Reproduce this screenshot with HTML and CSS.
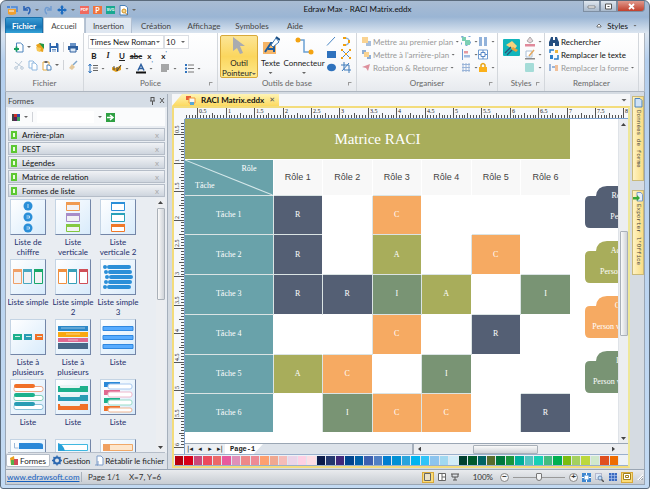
FILE: index.html
```
<!DOCTYPE html>
<html lang="fr">

<head>
     <meta charset="UTF-8">
     <meta name="viewport" content="width=device-width, initial-scale=1.0">
     <title>Edraw Max - RACI Matrix.eddx</title>
     <link rel="stylesheet" href="styles.css">
</head>

<body>
     <div class="window">

          <header class="titlebar">
               <div class="quick">
                    <svg width="12" height="12" viewBox="0 0 12 12"><path d="M1 2h3v2H1z" fill="#4a86d8"/><path d="M2 5h8v5q-5 2-8 0z" fill="#f0a030"/><path d="M5 3h6v5" fill="none" stroke="#4a86d8" stroke-width="1.5"/><path d="M3 7h5" stroke="#fff"/></svg>
                    <svg width="9" height="10" viewBox="0 0 9 10"><path d="M2 1v4h4M2 5q5-5 6 0q0 3-2 4" fill="none" stroke="#2c63b4" stroke-width="1.6"/></svg>
                    <i class="caret"></i>
                    <svg width="9" height="10" viewBox="0 0 9 10"><path d="M7 1v4H3M7 5Q2 0 1 5q0 3 2 4" fill="none" stroke="#6f9bd0" stroke-width="1.4"/></svg>
                    <svg width="10" height="10" viewBox="0 0 10 10"><path d="M5 0l2 2.500H6V4h1.500V3L10 5 7.500 7V6H6v1.500h1L5 10 3 7.500h1V6H2.500v1L0 5l2.500-2v1H4V2.500H3z" fill="#1d6cc0"/></svg>
                    <i class="caret"></i>
                    <span class="chip pdf">PDF</span>
                    <span class="chip ppt">P</span>
                    <span class="chip svgc">SVG</span>
                    <svg width="9" height="11" viewBox="0 0 9 11"><path d="M1 .5h5l2.500 2V10H1z" fill="#fff" stroke="#4a80b8"/><circle cx="5" cy="6" r="2" fill="#f7d890" stroke="#d09020"/><path d="M6.500 8l2 2" stroke="#b07018"/></svg>
                    <i class="caret"></i>
               </div>
               <h1>Edraw Max - RACI Matrix.eddx</h1>
               <div class="winbtns">
                    <button aria-label="Réduire"><svg width="9" height="7"><path d="M1 3h7v2H1z" fill="#fff" stroke="#555" stroke-width=".6"/></svg></button>
                    <button aria-label="Agrandir"><svg width="9" height="7"><path d="M1.500 1h6v5h-6z" fill="#fff" stroke="#555"/><path d="M3.500 3h2v1h-2z" fill="#555"/></svg></button>
                    <button class="close" aria-label="Fermer"><svg width="9" height="7"><path d="M2 1l5 5M7 1L2 6" stroke="#fff" stroke-width="1.800"/></svg></button>
               </div>
          </header>

          <nav class="tabs">
               <button class="file">Fichier</button>
               <button class="active">Accueil</button>
               <button class="hover">Insertion</button>
               <button>Création</button>
               <button>Affichage</button>
               <button>Symboles</button>
               <button class="short">Aide</button>
               <button class="right"><svg width="6" height="5"><path d="M1 3l2-2 2 2v1H1z" fill="#fff" stroke="#555" stroke-width=".8"/></svg>Styles<i class="caret"></i></button>
          </nav>

          <section class="ribbon">
               <div class="group g-file">
                    <div class="body">
                         <div class="line">
                              <svg class="w10" viewBox="0 0 10 11"><path d="M2.500 1h4l2.500 2v7H2.500z" fill="#fff" stroke="#4d84bd"/><path d="M0 7h5M2.500 4.500v5" stroke="#18a060" stroke-width="1.800"/></svg>
                              <i class="caret"></i>
                              <svg class="w10" viewBox="0 0 10 11"><path d="M1 3l4-2 4 3-1 6-4-1z" fill="#e9a31c"/><path d="M4 1l5 1v5z" fill="#209848"/><path d="M1 5l5 1-1 4-3-1z" fill="#f7c856"/></svg>
                              <svg class="w10" viewBox="0 0 10 11"><path d="M.5 1h8L9.500 2v8H.5z" fill="#2d66ad"/><path d="M2 1h5v3H2zM2 6h6v4H2z" fill="#fff"/><path d="M3 7.500h4M3 9h4" stroke="#2d66ad" stroke-width=".7"/></svg>
                              <b class="sep"></b>
                              <svg class="w10" viewBox="0 0 10 11"><path d="M2 1h6v3H2z" fill="#6a94c8"/><path d="M0 4h10v4H0z" fill="#2d5e9e"/><path d="M2 6h6v4H2z" fill="#dbe8f6" stroke="#2d5e9e"/></svg>
                         </div>
                         <div class="line">
                              <svg class="w10" viewBox="0 0 10 11"><path d="M1 2l7 5M8 1L3 7" stroke="#b8c8d8"/><circle cx="2" cy="8" r="1.300" fill="none" stroke="#b8c8d8"/><circle cx="8" cy="8" r="1.300" fill="none" stroke="#b8c8d8"/></svg>
                              <svg class="w10" viewBox="0 0 10 11"><path d="M1 1h4l1 1v6H1z" fill="#fff" stroke="#90b8e0"/><path d="M4 3h3l2 2v5H4z" fill="#fff" stroke="#90b8e0"/></svg>
                              <svg class="w10" viewBox="0 0 10 11"><path d="M1 2h6v8H1z" fill="#fff" stroke="#e4aa40"/><path d="M2.500 1h3v2h-3z" fill="#666"/><path d="M5 5h2l2 1.500V10H5z" fill="#fff" stroke="#4d84bd"/></svg>
                              <i class="caret"></i>
                              <b class="sep"></b>
                              <svg class="w10" viewBox="0 0 10 11"><path d="M9 1L5 5" stroke="#7fa6cc" stroke-width="1.500"/><path d="M4 4l3 3-3 3-3-2z" fill="#e4c89c"/></svg>
                         </div>
                    </div>
                    <h2>Fichier</h2>
               </div>

               <div class="group g-font">
                    <div class="body">
                         <div class="combos">
                              <span class="combo"><select aria-label="Police"><option>Times New Roman</option></select><i class="caret"></i></span>
                              <span class="combo size"><select aria-label="Taille"><option>10</option></select><i class="caret"></i></span>
                         </div>
                         <div class="fmt">
                              <button><b>B</b></button><button><i>I</i></button><button><u>U</u></button><button><s>abc</s></button><button>x<sub>,</sub></button><button>x<sup>'</sup></button>
                         </div>
                         <div class="fmt2">
                              <span><svg class="w10" viewBox="0 0 10 11"><path d="M2 1v9M.5 3L2 1l1.500 2M.5 8L2 10l1.500-2" fill="none" stroke="#2f72bd"/><path d="M5 2.500h5M5 5h5M5 7.500h5" stroke="#666"/></svg><i class="caret"></i></span>
                              <span><svg class="w10" viewBox="0 0 10 11"><path d="M0 4l4 1 5-3v5L4 9 0 7z" fill="#e4a01c"/><path d="M2 3v4M5 4v4l4-6" fill="none" stroke="#444"/></svg><i class="caret"></i></span>
                              <span><svg class="w10" viewBox="0 0 10 11"><path d="M2 7.500L5 1.500l3 6M3 5.500h4" fill="none" stroke="#2c5fa0" stroke-width="1.500"/><path d="M0 8.500h10v2H0z" fill="#111"/></svg><i class="caret"></i></span>
                              <span><svg class="w10" viewBox="0 0 10 11"><path d="M1 2h8M1 4h8M1 6h8M1 8h6" stroke="#555" stroke-width="1.200"/></svg><i class="caret"></i></span>
                              <span><svg class="w10" viewBox="0 0 10 11"><path d="M1 2h2M1 5.500h2M1 9h2" stroke="#2f72bd" stroke-width="2"/><path d="M4 2h6M4 5.500h6M4 9h6" stroke="#777"/></svg><i class="caret"></i></span>
                         </div>
                    </div>
                    <h2>Police</h2><i class="launch"></i>
               </div>

               <div class="group g-tools">
                    <div class="body row">
                         <button class="big on"><svg width="16" height="20" viewBox="0 0 16 20"><path d="M2 1l12 9H9l3 7-3 1-3-6-4 3z" fill="#a9abb0"/></svg><span>Outil<br>Pointeur<i class="caret"></i></span></button>
                         <button class="big"><svg width="18" height="20" viewBox="0 0 18 20"><path d="M1 6h13v12H1z" fill="#f5b568"/><path d="M3 16L9 7h3v9M6 13h5" fill="none" stroke="#1f5c9c" stroke-width="2"/><path d="M9 9l5-7 3 4-6 5z" fill="#fff" stroke="#3c78b4"/><path d="M14 1l4 3" stroke="#1d4f84" stroke-width="2"/></svg><span>Texte</span><i class="caret"></i></button>
                         <button class="big wide"><svg width="20" height="20" viewBox="0 0 20 20"><path d="M4 4h6v12h7" fill="none" stroke="#6aa0d4" stroke-width="1.500"/><circle cx="4" cy="4" r="2.500" fill="#f3a312"/><circle cx="17" cy="16" r="2.500" fill="#f3a312"/></svg><span>Connecteur</span><i class="caret"></i></button>
                         <div class="shapes">
                              <svg class="w10" viewBox="0 0 10 11"><path d="M1 9.500L9 1" stroke="#4a86c4"/></svg>
                              <svg class="w10" viewBox="0 0 10 11"><path d="M3 2q6 0 5 4q-1 3-4 3" fill="none" stroke="#8fb4dc" stroke-width="1.300"/><path d="M2 1h3v2H2zM7 4h2v3H7zM2 8h3v2H2z" fill="#f0a010"/></svg>
                              <svg class="w10" viewBox="0 0 10 11"><path d="M1 2h9v7H1z" fill="#2f72bd"/></svg>
                              <svg class="w10" viewBox="0 0 10 11"><path d="M1 1l8 8M9 1L1 9" stroke="#4a86c4"/><path d="M0 0h2v2H0zM8 0h2v2H8zM0 8h2v2H0zM8 8h2v2H8zM4 4h2v2H4z" fill="#f0a010"/></svg>
                              <svg class="w10" viewBox="0 0 10 11"><ellipse cx="5.500" cy="5.500" rx="4.500" ry="3.800" fill="#2f72bd"/></svg>
                              <svg class="w10" viewBox="0 0 10 11"><path d="M3 0v8h7M0 3h8v8M1 9l7-8" fill="none" stroke="#3d7abb"/></svg>
                         </div>
                    </div>
                    <h2>Outils de base</h2><i class="launch"></i>
               </div>

               <div class="group g-org">
                    <div class="body row">
                         <div class="list off">
                              <button><svg class="w10" viewBox="0 0 10 11"><path d="M5 5h5v5H5z" fill="#a8bfdc"/><path d="M1 1h6v6H1z" fill="#fad391"/></svg>Mettre au premier plan<i class="caret"></i></button>
                              <button><svg class="w10" viewBox="0 0 10 11"><path d="M1 1h4v4H1zM6 6h4v4H6z" fill="#8fafd6"/><path d="M3 3h5v5H3z" fill="#fad391"/></svg>Mettre à l'arrière-plan<i class="caret"></i></button>
                              <button><svg class="w10" viewBox="0 0 10 11"><path d="M1 5l8-3-2 7-2-3z" fill="#dd8f9c"/></svg>Rotation &amp; Retourner<i class="caret"></i></button>
                         </div>
                         <div class="pairs">
                              <span><svg class="w10" viewBox="0 0 10 11"><path d="M1 1h4v4H1zM4 4h5v5H4z" fill="#7ccfb4"/><path d="M.5.5h9v9h-9z" fill="none" stroke="#7aa5d6" stroke-dasharray="2 5"/></svg><i class="caret"></i></span>
                              <span><svg class="w10" viewBox="0 0 10 11"><path d="M1 1h3v9H1zM6 1h3v9H6z" fill="#92b2da"/></svg><i class="caret"></i></span>
                              <span><svg class="w10" viewBox="0 0 10 11"><path d="M1.500 0v11" stroke="#6e9bd0"/><path d="M3 2h4v2.500H3z" fill="#e59aa0"/><path d="M3 6h6v2.500H3z" fill="#9fbbe0"/></svg><i class="caret"></i></span>
                              <span><svg class="w10" viewBox="0 0 10 11"><path d="M.5 1h9v9h-9z" fill="#fff" stroke="#6e9bd0"/><path d="M3 3.500h4v4H3z" fill="none" stroke="#5a8ac8"/><path d="M5 1v2M5 8v2M1 5.500h2M7 5.500h2" stroke="#5a8ac8"/></svg></span>
                              <span><svg class="w10" viewBox="0 0 10 11"><path d="M1 2.500h8M1 5.500h8M1 8.500h8M2 1v9M5 1v9M8 1v9" stroke="#9ab4d8"/></svg><i class="caret"></i></span>
                              <span><svg class="w10" viewBox="0 0 10 11"><path d="M3 5V3q2-3 4 0v2" fill="none" stroke="#e8a312" stroke-width="1.500"/><path d="M1 5h8v5H1z" fill="#fbb01a"/></svg><i class="caret"></i></span>
                         </div>
                    </div>
                    <h2>Organiser</h2><i class="launch"></i>
               </div>

               <div class="group g-style">
                    <div class="body row">
                         <svg class="stylebtn" width="17" height="17" viewBox="0 0 17 17"><rect width="17" height="17" rx="1" fill="#12b5bb"/><path d="M3 6l6-4 5 5-3 4z" fill="#f8d27c"/><path d="M10 8l5 3-2 2-5-3z" fill="#e9a23b"/><path d="M2 14l6-6M4 16l5-5" stroke="#2c5578" stroke-width="1.300"/></svg>
                         <div class="styleicons">
                              <span><svg class="w10" viewBox="0 0 10 11"><path d="M2 5l3-4 3 4-3 2z" fill="#e7d5da" stroke="#aaa"/><path d="M0 8h10v2.500H0z" fill="#e18a9b"/></svg><i class="caret"></i></span>
                              <span><svg class="w10" viewBox="0 0 10 11"><path d="M1 2h6v6H1z" fill="#fff" stroke="#aac0d8"/><path d="M4 7l5-6" stroke="#e3a860" stroke-width="1.500"/><path d="M0 9h10v1.500H0z" fill="#8a8a8a"/></svg><i class="caret"></i></span>
                              <span><svg class="w10" viewBox="0 0 10 11"><rect y="1" width="9" height="9" rx="1" fill="#a5dcd8"/></svg><i class="caret"></i></span>
                         </div>
                    </div>
                    <h2>Styles</h2><i class="launch"></i>
               </div>

               <div class="group g-find">
                    <div class="body">
                         <div class="list">
                              <button><svg class="w10" viewBox="0 0 10 11"><path d="M1 4l1-3h2v9H0V6zM6 1h2l1 3 1 2v4H6z" fill="#244e80"/><path d="M4 4h2v3H4z" fill="#244e80"/></svg>Rechercher</button>
                              <button><svg class="w10" viewBox="0 0 10 11"><path d="M1 4V1h4M9 6v4H5" fill="none" stroke="#2b7fc8" stroke-width="1.500"/><path d="M6 1h3v3H6z" fill="#efb63a"/><path d="M1 6h3v4H1z" fill="#2b7fc8"/></svg>Remplacer le texte</button>
                              <button class="off"><svg class="w10" viewBox="0 0 10 11"><path d="M1 2v7M3 5h3" stroke="#7b9fd0" stroke-width="1.500"/><path d="M6 3h3v6H6z" fill="#f1c09a"/></svg>Remplacer la forme<i class="caret"></i></button>
                         </div>
                    </div>
                    <h2>Remplacer</h2>
               </div>
          </section>

          <main>
               <aside class="panel">
                    <div class="panelhead"><span>Formes</span>
                         <svg width="16" height="8" viewBox="0 0 16 8"><path d="M1 4h5M2 0v4M5 0v4M2 .5h3M3.500 4v4M11 1l4 5M15 1l-4 5" fill="none" stroke="#555"/></svg>
                    </div>
                    <div class="search">
                         <svg width="8" height="9" viewBox="0 0 8 9"><path d="M0 1h2v7H0z" fill="#444"/><path d="M2 1h3v3H2z" fill="#d03028"/><path d="M5 1h3v3H5z" fill="#2c50a8"/><path d="M2 4h3v4H2z" fill="#5a2058"/><path d="M5 4h3v4H5z" fill="#40a060"/></svg>
                         <i class="caret"></i><b class="sep"></b>
                         <input type="text" aria-label="Rechercher des formes"><i class="caret"></i>
                         <button aria-label="Aller"><svg width="9" height="9"><path d="M0 0h9v9H0z" fill="#2fa043"/><path d="M1 4.500h5M4 2l3 2.500L4 7" fill="none" stroke="#fff" stroke-width="1.500"/></svg></button>
                    </div>
                    <div class="libs">
                         <button>Arrière-plan<em>x</em></button>
                         <button>PEST<em>x</em></button>
                         <button>Légendes<em>x</em></button>
                         <button>Matrice de relation<em>x</em></button>
                         <button>Formes de liste<em>x</em></button>
                    </div>
                    <div class="shapelist">
                         <div class="thumbs">
                              <figure><svg viewBox="0 0 34 34"><g fill="#2b8fd8"><circle cx="17" cy="6" r="4.500"/><circle cx="17" cy="17" r="4.500"/><circle cx="17" cy="28" r="4.500"/></g><path d="M17 4v4M15.500 16h3v2h-3M15.500 27h3v2h-3" fill="none" stroke="#bfe0f8"/></svg><figcaption>Liste de chiffre</figcaption></figure>
                              <figure><svg viewBox="0 0 34 34"><g fill="#f2f2f4"><path d="M10.500 3.500h13v7h-13z" stroke="#f09a50"/><path d="M10.500 14.500h13v7h-13z" stroke="#a78cc8"/><path d="M10.500 25.500h13v6h-13z" stroke="#84c840"/></g><path d="M10 2h14v3H10z" fill="#f09a50"/><path d="M10 13h14v3H10z" fill="#a78cc8"/><path d="M10 24h14v3H10z" fill="#84c840"/></svg><figcaption>Liste verticale</figcaption></figure>
                              <figure><svg viewBox="0 0 34 34"><g fill="#fff"><path d="M10.500 3.500h13v7h-13z" stroke="#2b8fd8"/><path d="M10.500 14.500h13v7h-13z" stroke="#28a0b8"/><path d="M10.500 25.500h13v6h-13z" stroke="#f07828"/></g><path d="M10 2h14v2H10z" fill="#2b8fd8"/><path d="M10 13h14v2H10z" fill="#28a0b8"/><path d="M10 24h14v3H10z" fill="#f07828"/></svg><figcaption>Liste verticale 2</figcaption></figure>

                              <figure><svg viewBox="0 0 34 34"><g fill="#f2f2f4"><path d="M2.500 9.500h8v14h-8z" stroke="#f0a068"/><path d="M12.500 9.500h8v14h-8z" stroke="#48a8c0"/><path d="M23.500 9.500h8v14h-8z" stroke="#18a868"/></g><path d="M2 9h9v3H2z" fill="#f0a068"/><path d="M12 9h9v3h-9z" fill="#48a8c0"/><path d="M23 9h9v3h-9z" fill="#18a868"/></svg><figcaption>Liste simple</figcaption></figure>
                              <figure><svg viewBox="0 0 34 34"><g fill="#fff"><path d="M2.500 9.500h8v14h-8z" stroke="#f09040"/><path d="M12.500 9.500h8v14h-8z" stroke="#38a0b8"/><path d="M23.500 9.500h8v14h-8z" stroke="#d05058"/></g><path d="M2 9h9v3H2z" fill="#f09040"/><path d="M12 9h9v3h-9z" fill="#38a0b8"/><path d="M23 9h9v3h-9z" fill="#d05058"/></svg><figcaption>Liste simple 2</figcaption></figure>
                              <figure><svg viewBox="0 0 34 34"><g stroke="#2b8fd8" stroke-width="4" stroke-linecap="round"><path d="M8 7h20M9 12h20M10 17h20M9 22h20M8 27h20"/></g><g fill="#2b8fd8"><circle cx="4" cy="7" r="2"/><circle cx="5" cy="12" r="2"/><circle cx="6" cy="17" r="2"/><circle cx="5" cy="22" r="2"/><circle cx="4" cy="27" r="2"/></g></svg><figcaption>Liste simple 3</figcaption></figure>

                              <figure><svg viewBox="0 0 34 34"><path d="M2 14h9v6H2z" fill="#1cb08c"/><path d="M13 14h8v6h-8z" fill="#289cb4"/><path d="M24 14h8v6h-8z" fill="#f07028"/><path d="M4 16.500h5M15 16.500h5M26 16.500h5" stroke="#cdeee6"/></svg><figcaption>Liste à plusieurs</figcaption></figure>
                              <figure><svg viewBox="0 0 34 34"><path d="M2 6h30v5H2z" fill="#2b88c8"/><path d="M2 12h30v5H2z" fill="#f8a810"/><path d="M2 18h30v4H2z" fill="#e06890"/><path d="M2 23h30v6H2z" fill="#486888"/><path d="M5 8h24M10 14h14M12 20h10" stroke="#fff" stroke-opacity=".5"/></svg><figcaption>Liste à plusieurs</figcaption></figure>
                              <figure><svg viewBox="0 0 34 34"><g fill="#58acff" stroke="#3088e0"><path d="M2 6.500h30v4H2zM2 15.500h30v4H2zM2 24.500h30v4H2z"/></g></svg><figcaption>Liste</figcaption></figure>

                              <figure><svg viewBox="0 0 34 34"><g fill="#fff"><rect x="3" y="6.500" width="29" height="5" rx="2" stroke="#f0a888"/><rect x="3" y="15.500" width="29" height="5" rx="2" stroke="#80d0b8"/><rect x="3" y="24.500" width="29" height="5" rx="2" stroke="#88c0d8"/></g><rect x="3" y="4" width="21" height="4" rx="2" fill="#f07028"/><rect x="3" y="13" width="21" height="4" rx="2" fill="#1cb08c"/><rect x="3" y="22" width="21" height="4" rx="2" fill="#289cb4"/></svg><figcaption>Liste</figcaption></figure>
                              <figure><svg viewBox="0 0 34 34"><path d="M2 6h30v6H2z" fill="#1cb08c"/><path d="M2 15h30v6H2z" fill="#289cb4"/><path d="M2 24h30v6H2z" fill="#f07028"/><g fill="#e8f4f4"><rect x="4" y="5" width="20" height="3" rx="1"/><rect x="4" y="14" width="20" height="3" rx="1"/><rect x="4" y="23" width="20" height="3" rx="1"/></g></svg><figcaption>Liste</figcaption></figure>
                              <figure><svg viewBox="0 0 34 34"><path d="M3 2h16v5H3z" fill="#2b88d8"/><path d="M3 10h16v5H3z" fill="#e06890"/><path d="M3 18h16v5H3z" fill="#1cb08c"/><path d="M3 26h16v5H3z" fill="#f07028"/><g fill="#fff"><rect x="7" y="4" width="24" height="5" rx="2" stroke="#a8c8f0"/><rect x="7" y="12" width="24" height="5" rx="2" stroke="#f0b8cc"/><rect x="7" y="20" width="24" height="5" rx="2" stroke="#98dcc8"/><rect x="7" y="28" width="24" height="4" rx="2" stroke="#f0b490"/></g></svg><figcaption>Liste</figcaption></figure>

                              <figure><svg viewBox="0 0 34 34"><path d="M8 3h20q4 0 4 2v4H8z" fill="#2b88d8"/><path d="M8 12h20q4 0 4 2v4H8z" fill="#f07028"/><path d="M3.500 3v5h4M3.500 12v5h4" fill="none" stroke="#9cb8d8"/></svg></figure>
                              <figure><svg viewBox="0 0 34 34"><path d="M2.500 4.500h29v6h-29z" fill="#fff" stroke="#40b8e0"/><path d="M2 3q5 1 7 8H2z" fill="#28a0d8"/><path d="M2 14h30v4H2z" fill="#f07028"/></svg></figure>
                              <figure><svg viewBox="0 0 34 34"><path d="M2.500 4.500h29v6h-29z" fill="#fde6cc" stroke="#f0a868"/><path d="M2 4h7v7H2z" fill="#f0a060"/><path d="M2 14h30v4H2z" fill="#48a8c0"/></svg></figure>
                         </div>
                         <div class="vscroll"><i class="up"></i><b></b><i class="down"></i></div>
                    </div>
                    <div class="paneltabs">
                         <button class="active"><svg class="w10" viewBox="0 0 10 11"><path d="M1 3l4-2 1 8-4 1z" fill="#e8a020"/><path d="M5 4h4v6H5z" fill="#d04858"/><path d="M2 5h3v5H2z" fill="#58b048"/></svg>Formes</button>
                         <button><svg class="w10" viewBox="0 0 10 11"><circle cx="5" cy="5.500" r="3" fill="none" stroke="#2c68b0" stroke-width="2"/><path d="M5 .5v2M5 8.500v2M0 5.500h2M8 5.500h2M1.500 2l1 1M8.500 2l-1 1M1.500 9l1-1M8.500 9l-1-1" stroke="#2c68b0" stroke-width="1.300"/></svg>Gestion</button>
                         <button><svg class="w10" viewBox="0 0 10 11"><path d="M3 1h4l2 2v7H3z" fill="#fff" stroke="#7c9cc8"/><path d="M1 10h3V6" stroke="#7c9cc8" fill="none"/></svg>Rétablir le fichier</button>
                    </div>
               </aside>

               <section class="doc">
                    <div class="doctabs">
                         <div class="doctab"><svg class="w10" viewBox="0 0 10 11"><path d="M0 1h5v4H0z" fill="#e86038"/><path d="M3 3h6v5H3z" fill="#f8f8f4" stroke="#f09838"/><path d="M4 7h4v3H4z" fill="#58a8d8"/></svg>RACI Matrix.eddx<em>✕</em></div>
                         <i class="caret big"></i>
                    </div>
                    <div class="editor">
                         <div class="corner"></div>
                         <svg class="hruler" id="hruler"></svg>
                         <svg class="vruler" id="vruler"></svg>
                         <div class="canvas">
                              <table class="raci">
                                   <colgroup><col class="tasks"><col span="6"></colgroup>
                                   <thead>
                                        <tr class="title"><th colspan="7">Matrice RACI</th></tr>
                                        <tr class="roles">
                                             <th class="split"><svg viewBox="0 0 87 36" preserveAspectRatio="none"><path d="M0 0l87 36" stroke="#d5e8ea"/></svg><span class="r">Rôle</span><span class="t">Tâche</span></th>
                                             <th>Rôle 1</th><th>Rôle 2</th><th>Rôle 3</th><th>Rôle 4</th><th>Rôle 5</th><th>Rôle 6</th>
                                        </tr>
                                   </thead>
                                   <tbody>
                                        <tr><th>Tâche 1</th><td class="R">R</td><td></td><td class="C">C</td><td></td><td></td><td></td></tr>
                                        <tr><th>Tâche 2</th><td class="R">R</td><td></td><td class="A">A</td><td></td><td class="C">C</td><td></td></tr>
                                        <tr><th>Tâche 3</th><td class="R">R</td><td class="R">R</td><td class="I">I</td><td class="A">A</td><td></td><td class="I">I</td></tr>
                                        <tr><th>Tâche 4</th><td></td><td></td><td class="C">C</td><td></td><td class="R">R</td><td></td></tr>
                                        <tr><th>Tâche 5</th><td class="A">A</td><td class="C">C</td><td></td><td class="I">I</td><td></td><td></td></tr>
                                        <tr><th>Tâche 6</th><td></td><td class="I">I</td><td class="C">C</td><td class="C">C</td><td></td><td class="R">R</td></tr>
                                   </tbody>
                              </table>
                              <div class="legend">
                                   <div class="R"><span>Responsible</span><span>Person liable</span></div>
                                   <div class="A"><span>Accountable</span><span>Person in charge of</span></div>
                                   <div class="C"><span>Consulted</span><span>Person who is consulted</span></div>
                                   <div class="I"><span>Informed</span><span>Person who is informed</span></div>
                              </div>
                         </div>
                         <div class="vscroll doc-scroll"><i class="up"></i><b></b><i class="down"></i></div>
                         <div class="sheets">
                              <div class="navs"><button aria-label="Première page">|◂</button><button aria-label="Page précédente">◂</button><button aria-label="Page suivante">▸</button><button aria-label="Dernière page">▸|</button></div>
                              <div class="sheet">Page-1</div>
                              <div class="fill"></div>
                              <div class="hscroll"><i class="left"></i><b></b><i class="rightarrow"></i></div>
                         </div>
                         <div class="palette" id="palette"></div>
                    </div>
               </section>

               <nav class="rail">
                    <button><svg width="9" height="10" viewBox="0 0 9 10"><path d="M1 .5h5l2 2V9H1z" fill="#cfe2f6" stroke="#4d84bd"/></svg><span>Données de forme</span></button>
                    <button><svg width="10" height="10" viewBox="0 0 10 10"><path d="M4 .5h4l1.500 2V9H4z" fill="#e6effa" stroke="#7c9cc8"/><path d="M0 5h4V3l3 3-3 3V7.500H0z" fill="#38a838"/></svg><span>Exporter l'Office</span></button>
               </nav>
          </main>

          <footer class="status">
               <a href="#">www.edrawsoft.com</a>
               <span class="page">Page 1/1</span>
               <span class="pos">X=7, Y=6</span>
               <div class="views">
                    <button class="on" aria-label="Page"><svg width="8" height="8"><path d="M.5.5h6v7h-6z" fill="#e8e0c8" stroke="#666"/></svg></button>
                    <button aria-label="Plan"><svg width="8" height="8"><path d="M.5.5h7v7h-7zM4 1v6M4 4h4" fill="#fff" stroke="#666"/></svg></button>
                    <button aria-label="Présentation"><svg width="8" height="8"><path d="M0 1h8M1 1v3h6V1M4 4v3M2 7h4" fill="none" stroke="#555"/></svg></button>
                    <span class="zoom">100%</span>
                    <button class="round" aria-label="Zoom arrière">−</button>
                    <input type="range" aria-label="Zoom" value="50">
                    <button class="round" aria-label="Zoom avant">+</button>
                    <button aria-label="Ajuster"><svg width="9" height="9"><path d="M0 0h9v9H0z" fill="#3d86d0"/><path d="M2.500 2.500h4v4h-4z" fill="#fff"/><path d="M4.500 0v2M4.500 7v2M0 4.500h2M7 4.500h2" stroke="#fff"/></svg></button>
                    <button aria-label="Zone"><svg width="9" height="9"><path d="M.5.5h6v6h-6z" fill="#dce8f6" stroke="#88a" stroke-dasharray="1 1"/><circle cx="5" cy="5" r="2" fill="#c6dcf4" stroke="#6688b0"/><path d="M6.500 6.500L9 9" stroke="#555" stroke-width="1.500"/></svg></button>
                    <button aria-label="Grille"><svg width="8" height="8"><path d="M0 0h8v8H0z" fill="#3c6cc0"/><path d="M2.500 0v8M5.500 0v8M0 2.500h8M0 5.500h8" stroke="#a8c0ec" stroke-width=".7"/></svg></button>
                    <button class="on" aria-label="Plein écran"><svg width="9" height="8"><path d="M.5.5h7v6h-7z" fill="#fff" stroke="#a08020"/><path d="M2.500 2.500h3v2h-3z" fill="none" stroke="#a08020"/></svg></button>
                    <i class="grip"></i>
               </div>
          </footer>
     </div>

     <script src="script.js"></script>
</body>

</html>
```
FILE: styles.css
```
* {
     box-sizing: border-box;
}

body {
     margin: 0;
     font: 8px/10px Lato, "Open Sans", sans-serif;
     color: #222;
}

button,
input,
select {
     font: inherit;
     color: inherit;
     background: none;
     border: 0;
     padding: 0;
     margin: 0;
}

h1,
h2,
figure {
     margin: 0;
     font-size: 8px;
     font-weight: normal;
}

svg {
     display: block;
     flex: none;
}

.w10 {
     width: 10px;
     height: 11px;
}

.window {
     height: 100vh;
     display: flex;
     flex-direction: column;
     padding: 2px 4px 3px 4px;
     border: 1px solid #5b6b7c;
     border-radius: 6px 6px 3px 3px;
     background: linear-gradient(#a9bcd3 0, #9ab5d4 16px, #dbe5f0 32px, #b4cfee 60px, #c3daf2);
}

.caret {
     display: inline-block;
     flex: none;
     width: 4px;
     height: 2px;
     background: #666;
     clip-path: polygon(0 0, 100% 0, 50% 100%);
}

.caret.big {
     width: 6px;
     height: 3px;
}

.sep {
     width: 1px;
     height: 10px;
     background: #d0d3d8;
}

/* title bar */
.titlebar {
     display: grid;
     grid-template-columns: 1fr auto 1fr;
     height: 14px;
     flex: none;
     padding-left: 1px;
}

.quick {
     display: flex;
     align-items: center;
     gap: 4px;
}

.quick .caret {
     margin: 0 1px 0 0;
}

.chip {
     width: 9px;
     height: 8px;
     color: #fff;
     font-size: 4px;
     font-weight: bold;
     line-height: 8px;
     text-align: center;
}

.pdf {
     background: #f06a60;
}

.ppt {
     background: #f0743c;
     font-size: 7px;
}

.svgc {
     background: #18a890;
}

.titlebar h1 {
     line-height: 13px;
     padding-left: 64px;
     color: #111;
}

.winbtns {
     display: flex;
     justify-content: flex-end;
     height: 10px;
     margin-top: -2px;
}

.winbtns button {
     width: 17px;
     height: 11px;
     display: grid;
     place-items: center;
     border: 1px solid #7e8fa3;
     border-top: 0;
     background: linear-gradient(#dfe6ee, #a9b9cc);
}

.winbtns .close {
     width: 28px;
     background: linear-gradient(#e0998c, #c2402c);
     border-radius: 0 0 4px 0;
}

/* tabs */
.tabs {
     display: flex;
     flex: none;
     height: 16px;
}

.tabs button {
     width: 48px;
     border: 1px solid transparent;
     border-bottom: 0;
     border-radius: 2px 2px 0 0;
     color: #444;
}

.tabs .file {
     width: 38px;
     color: #fff;
     font-weight: bold;
     background: linear-gradient(#3a9cd4, #1573b5 60%, #35a4d8);
     border-color: #1a6fa8;
}

.tabs .active {
     width: 42px;
     background: #fff;
     border-color: #b8c4d2;
}

.tabs .hover {
     width: 47px;
     background: #dfe7f1;
     border-color: #b2c0d2;
}

.tabs .short {
     width: 38px;
}

.tabs .right {
     display: flex;
     align-items: center;
     gap: 5px;
     width: auto;
     margin-left: auto;
     margin-right: 7px;
     color: #111;
}

/* ribbon */
.ribbon {
     display: flex;
     flex: none;
     height: 59px;
     background: linear-gradient(#fff, #f7f8fa 60%, #e7eaee);
     border: 1px solid #aeb6c0;
     border-top: 0;
}

.group {
     position: relative;
     display: flex;
     flex-direction: column;
     padding-top: 2px;
     border-right: 1px solid #d3d7dc;
}

.group .body {
     flex: 1;
}

.group .row {
     display: flex;
}

.group h2 {
     height: 13px;
     text-align: center;
     color: #666;
}

.launch {
     position: absolute;
     right: 4px;
     bottom: 5px;
     width: 4px;
     height: 4px;
     border: 1px solid #999;
     border-right-color: transparent;
     border-bottom-color: transparent;
}

.g-file {
     width: 78px;
}

.g-file .line {
     display: flex;
     align-items: center;
     gap: 4px;
     height: 18px;
     margin-left: 8px;
}

.g-file .body {
     padding-top: 3px;
}

.g-file .caret {
     margin-left: -1px;
}

.g-file .sep {
     margin-left: auto;
}

.g-file .line>:last-child {
     margin-right: 5px;
}

.g-font {
     width: 134px;
}

.combos {
     display: flex;
     margin-left: 4px;
}

.combo {
     display: flex;
     align-items: center;
     width: 76px;
     height: 14px;
     padding: 0 3px 0 1px;
     border: 1px solid #dcdfe4;
     background: #fff;
}

.combo.size {
     width: 25px;
}

.combo select {
     appearance: none;
     flex: 1;
     min-width: 0;
     font-size: 8px;
}

.fmt {
     display: flex;
     height: 13px;
     margin-left: 3px;
}

.fmt button {
     width: 14px;
     font-weight: bold;
     color: #222;
}

.fmt i {
     font-family: "Liberation Serif", serif;
}

.fmt sub,
.fmt sup {
     font-size: 6px;
     line-height: 0;
     color: #2c68b0;
}

.fmt2 {
     display: flex;
     gap: 7px;
     height: 13px;
     margin-left: 4px;
}

.fmt2 span,
.pairs span,
.styleicons span {
     display: flex;
     align-items: center;
     gap: 3px;
}

.g-tools {
     width: 139px;
}

.big {
     display: flex;
     flex-direction: column;
     align-items: center;
     width: 25px;
     height: 43px;
     border: 1px solid transparent;
}

button.big svg {
     margin-bottom: 2px;
}

button.big>.caret {
     margin-top: 4px;
}

.big.on {
     width: 38px;
     margin-left: 2px;
     border-color: #d8a93a;
     border-radius: 2px;
     background: linear-gradient(#fce596, #fbd65e 50%, #fde98c);
}

.big.wide {
     width: 42px;
}

.big .caret {
     vertical-align: middle;
}

.shapes {
     display: grid;
     grid-template-columns: 10px 10px;
     grid-template-rows: 13px 13px 13px;
     gap: 0 5px;
     align-items: center;
     height: 39px;
     margin-left: 1px;
}

.g-org {
     width: 141px;
}

.list {
     display: grid;
     grid-template-rows: 13px 13px 13px;
     justify-items: start;
     margin-left: 4px;
}

.list button {
     display: flex;
     align-items: center;
     gap: 2px;
     color: #111;
}

.off button,
.list button.off {
     color: #999;
}

.pairs {
     display: grid;
     grid-template: 13px 13px 13px / 17px 17px;
     margin: 0 2px 0 auto;
}

.g-style {
     width: 47px;
}

.stylebtn {
     margin: 4px 0 0 5px;
}

.styleicons {
     display: grid;
     grid-template-rows: 13px 13px 13px;
     margin-left: 5px;
}

.g-find {
     width: 94px;
}

/* middle */
main {
     display: flex;
     flex: 1;
     min-height: 0;
     background: #d5dbe2;
     border: 1px solid #9aa6b4;
     border-width: 0 1px;
     padding-top: 2px;
}

.panel {
     display: flex;
     flex-direction: column;
     width: 162px;
     margin-right: 4px;
     border-right: 1px solid #a5afbb;
     background: #e9edf2;
}

.panelhead {
     display: flex;
     align-items: center;
     justify-content: space-between;
     height: 13px;
     flex: none;
     padding: 0 2px;
     color: #444;
     background: #d5dde6;
}

.search {
     display: flex;
     align-items: center;
     gap: 4px;
     height: 18px;
     flex: none;
     margin: 1px 2px;
     padding-left: 4px;
     background: #fafbfc;
}

.search input {
     width: 57px;
     height: 12px;
     background: #fff;
}

.libs {
     display: grid;
     gap: 1px;
     padding: 1px 2px 1px;
}

.libs button {
     display: flex;
     align-items: center;
     gap: 5px;
     height: 13px;
     padding: 0 5px 0 2px;
     border: 1px solid #b5bdc8;
     background: linear-gradient(#f0f2f5, #ced5de);
     color: #111;
}

.libs button::before {
     content: "";
     width: 2px;
     height: 4px;
     border: 2px solid #5cc832;
     background: #eaffdc;
}

.libs em {
     margin-left: auto;
     font-style: normal;
     color: #aaa;
}

.shapelist {
     display: flex;
     flex: 1;
     min-height: 0;
     margin: 0 2px;
     overflow: hidden;
     border-bottom: 1px solid #b5bdc8;
}

.thumbs {
     display: grid;
     grid-template-columns: 36px 36px 36px;
     grid-auto-rows: 60px;
     column-gap: 9px;
     flex: 1;
     padding: 1px 0 0 2px;
}

figure svg {
     width: 36px;
     height: 36px;
     border: 1px solid #c4d4e4;
     border-right-color: #7386a8;
     border-bottom-color: #7386a8;
     background: linear-gradient(135deg, #fff, #d8ebfb);
}

figcaption {
     margin: 2px -4px 0;
     text-align: center;
     color: #24306c;
}

.vscroll {
     display: flex;
     flex-direction: column;
     align-items: center;
     justify-content: space-between;
     width: 9px;
     padding: 3px 0;
     background: #eceef1;
}

.vscroll b {
     width: 8px;
     height: 92px;
     margin-bottom: auto;
     margin-top: 4px;
     border: 1px solid #a9b0b8;
     border-radius: 1px;
     background: linear-gradient(90deg, #fafafa, #cfd3d8);
}

.up,
.down {
     width: 5px;
     height: 3px;
     background: #444;
     clip-path: polygon(0 0, 100% 0, 50% 100%);
}

.up {
     clip-path: polygon(50% 0, 100% 100%, 0 100%);
}

.paneltabs {
     display: flex;
     height: 16px;
     flex: none;
     padding: 1px 0 2px;
     background: #dde2e8;
}

.paneltabs button {
     display: flex;
     align-items: center;
     gap: 1px;
     padding: 0 2px;
}

.paneltabs .active {
     padding-right: 3px;
     background: #fff;
     border: 1px solid #b5bdc8;
     border-radius: 0 0 2px 2px;
}

/* document */
.doc {
     display: flex;
     flex-direction: column;
     flex: 1;
     min-width: 0;
     margin-bottom: 1px;
}

.doctabs {
     display: flex;
     align-items: center;
     justify-content: space-between;
     height: 12px;
     flex: none;
     padding-right: 3px;
     background: #f5f6f8;
}

.doctab {
     display: flex;
     align-items: center;
     gap: 5px;
     height: 12px;
     padding: 0 4px 0 14px;
     font-weight: bold;
     color: #111;
     background: linear-gradient(#fff4b4, #fcd960);
     clip-path: polygon(10px 0, 100% 0, 100% 100%, 0 100%);
}

.doctab em {
     font: 7px/10px "DejaVu Sans", sans-serif;
     color: #555;
}

.editor {
     display: grid;
     grid-template-columns: 11px 1fr 10px;
     grid-template-rows: 11px 1fr 11px 12px;
     flex: 1;
     min-height: 0;
     border: 2px solid #f3dc7c;
     border-right-color: #eee79a;
     background: #eef2f7;
}

.corner,
.hruler,
.vruler {
     background: #f6f8fb;
}

.hruler {
     grid-column: 2 / 4;
     width: 100%;
     height: 11px;
     border-bottom: 1px solid #7fa3cf;
}

.vruler {
     grid-row: 2 / 4;
     width: 11px;
     height: 100%;
     border-right: 1px solid #7fa3cf;
}

.hruler text,
.vruler text {
     font: 6px "Liberation Serif", serif;
     fill: #222;
}

.canvas {
     position: relative;
     overflow: hidden;
     background: #fff;
     font-family: "Liberation Serif", serif;
}

.raci {
     width: 385px;
     height: 313px;
     table-layout: fixed;
     border-collapse: collapse;
     color: #fff;
}

.tasks {
     width: 88px;
}

.raci th,
.raci td {
     padding: 0;
     border: 1px solid #fff;
     border-width: 1px 0 0 1px;
     font-weight: normal;
     text-align: center;
}

.raci th:first-child {
     border-left: 0;
     background: #69a2aa;
}

.raci tbody th,
.raci tbody .R,
.raci tbody .A,
.raci tbody .C,
.raci tbody .I {
     border-color: #dbe4e4;
}

.raci .title th {
     height: 40px;
     border: 0;
     background: #a8ad5b;
     font-size: 15px;
}

.raci .roles th {
     height: 36px;
     background: #f8f8f8;
     color: #444;
     font: 9px "Liberation Sans", sans-serif;
}

.raci .roles .split {
     position: relative;
     background: #69a2aa;
     color: #fff;
     font: 8px "Liberation Serif", serif;
}

.split svg {
     position: absolute;
     inset: 0;
     width: 100%;
     height: 100%;
}

.split span {
     display: block;
     padding: 0 16px 0 10px;
     text-align: left;
     line-height: 17px;
}

.split .r {
     text-align: right;
}

.R {
     background: #545f74;
}

.A {
     background: #a8ad5b;
}

.C {
     background: #f6aa62;
}

.I {
     background: #799474;
}

/* legend shapes lying on the drawing page */
.legend {
     position: absolute;
     left: 400px;
     top: 67px;
     display: grid;
     gap: 13px;
     width: 92px;
     color: #fff;
}

.legend div {
     height: 42px;
     padding-top: 5px;
     display: grid;
     grid-template-rows: 21px 12px;
     justify-items: center;
     white-space: nowrap;
     clip-path: path("M0 15q0-5 5-5h6q1-10 11-10h74v42H5q-5 0-5-5z");
}

.doc-scroll {
     width: 10px;
     border-left: 1px solid #dfe3e8;
     padding-top: 4px;
}

.doc-scroll b {
     height: 105px;
     margin-top: 105px;
}

.sheets {
     grid-column: 2 / 4;
     display: flex;
     border-top: 1px solid #9aa6b4;
     background: #dde3ea;
}

.navs {
     display: flex;
     width: 40px;
     background: #eceff3;
}

.navs button {
     width: 10px;
     font: 7px/9px "DejaVu Sans", sans-serif;
}

.sheet {
     width: 38px;
     padding-left: 5px;
     font: bold 7px/10px "Liberation Mono", monospace;
     background: #fff;
     clip-path: polygon(0 0, 100% 0, 76% 100%, 0 100%);
}

.fill {
     flex: 1;
     border-right: 2px solid #a5afbb;
}

.hscroll {
     display: flex;
     align-items: center;
     width: 214px;
     padding: 0 13px 0 4px;
     background: #eceef1;
}

.hscroll b {
     width: 65px;
     height: 9px;
     margin: 0 auto 0 52px;
     border: 1px solid #a9b0b8;
     border-radius: 1px;
     background: linear-gradient(#fafafa, #cfd3d8);
}

.left,
.rightarrow {
     width: 3px;
     height: 5px;
     background: #444;
     clip-path: polygon(100% 0, 100% 100%, 0 50%);
}

.rightarrow {
     clip-path: polygon(0 0, 100% 50%, 0 100%);
}

.palette {
     grid-column: 1 / 4;
     display: flex;
     padding: 1px 9px 0 1px;
     border-top: 1px solid #9ab0cc;
     border-bottom: 1px solid #9ab0cc;
     background: #eef2f7;
}

.palette i {
     flex: 1;
     border-right: 1px solid #dfe6ee;
}

/* right rail */
.rail {
     display: flex;
     flex-direction: column;
     gap: 9px;
     width: 14px;
     padding: 2px 0 0 2px;
}

.rail button {
     display: flex;
     flex-direction: column;
     align-items: center;
     gap: 2px;
     width: 12px;
     height: 85px;
     padding-top: 1px;
     border: 1px solid #c9b97a;
     background: linear-gradient(90deg, #fff3c4, #f9dd84);
}

.rail span {
     writing-mode: vertical-rl;
     font: 6px/9px "Liberation Mono", monospace;
     color: #444;
}

/* status bar */
.status {
     display: flex;
     align-items: center;
     height: 16px;
     flex: none;
     padding-left: 1px;
     border: 1px solid #9aa6b4;
     background: linear-gradient(#e9ebee, #c8cdd3);
     color: #333;
}

.status a {
     width: 74px;
     color: #1460c0;
}

.page {
     padding-left: 6px;
     border-left: 1px solid #aab2bb;
}

.pos {
     margin-left: 9px;
}

.views {
     display: flex;
     align-items: center;
     gap: 4px;
     margin-left: auto;
}

.views button {
     display: grid;
     place-items: center;
     width: 9px;
     height: 11px;
}

.views .on {
     width: 12px;
     border: 1px solid #d8a93a;
     background: #fbdc78;
}

.zoom {
     margin: 0 0 0 9px;
}

.views .round {
     width: 9px;
     height: 9px;
     border: 1px solid #888;
     border-radius: 50%;
     background: #f4f5f6;
     font: bold 8px/6px "Liberation Sans", sans-serif;
}

.views .zoom+.round {
     margin-left: 3px;
}

.views input {
     appearance: none;
     width: 52px;
     height: 1px;
     background: #999;
}

.views input::-webkit-slider-thumb {
     appearance: none;
     width: 6px;
     height: 8px;
     border: 1px solid #777;
     border-radius: 1px 1px 3px 3px;
     background: #f4f5f6;
}

.grip {
     width: 6px;
     height: 6px;
     margin-right: 1px;
     background: repeating-linear-gradient(135deg, #fff 0 1px, #a5acb4 1px 2px);
     clip-path: polygon(100% 0, 100% 100%, 0 100%);
}
```
FILE: script.js
```
const colors = ['#b5000f', '#d80018', '#cc4a78', '#ec4b5c', '#ec6868', '#e85a9c', '#e090b8', '#ee8888', '#ee8a94', '#fda070',
     '#f0a890', '#f5bcb8', '#ead4e8', '#fdd0e4', '#fddde4', '#0c1c4a', '#24386e', '#40287a', '#00448e', '#0060a8',
     '#3c60b0', '#5080c4', '#007ed0', '#0090d4', '#28a4dc', '#00b4f0', '#30c4f8', '#8cc4ee', '#a0d8f0', '#d0ecf8',
     '#004030', '#005a2c', '#006464', '#586c2c', '#00783c', '#1a963c', '#00b09c', '#54c4c0', '#18d0b4', '#44bc80',
     '#00b050', '#7cbc10', '#a4d060', '#bcd83c', '#d0e8cc', '#e05020', '#ee6c00']

document.getElementById('palette').innerHTML = colors.map(c => `<i style="background:${c}"></i>`).join('')

// ten ticks for each half unit, the tenth is long and has a label
function drawRuler(id, start, count, vertical) {
     let out = ''
     for (let i = 6; i <= count * 10; i++) {
          let p = start + Math.round(i * 142 / 50)
          let major = i % 10 == 0
          let from = major ? 0 : (i % 5 == 0 ? 5 : 7)
          if (vertical) {
               out += `<path d="M${from} ${p}h${11 - from}" stroke="#555" transform="translate(0 .5)"/>`
               if (major) out += `<text transform="translate(5 ${p - 1}) rotate(-90)">${i / 20}</text>`
          } else {
               out += `<path d="M${p} ${from}v${11 - from}" stroke="#555" transform="translate(.5 0)"/>`
               if (major) out += `<text x="${p + 2}" y="5">${i / 20}</text>`
          }
     }
     document.getElementById(id).innerHTML = out
}

drawRuler('hruler', -16, 16, false)
drawRuler('vruler', -13, 12, true)
```
